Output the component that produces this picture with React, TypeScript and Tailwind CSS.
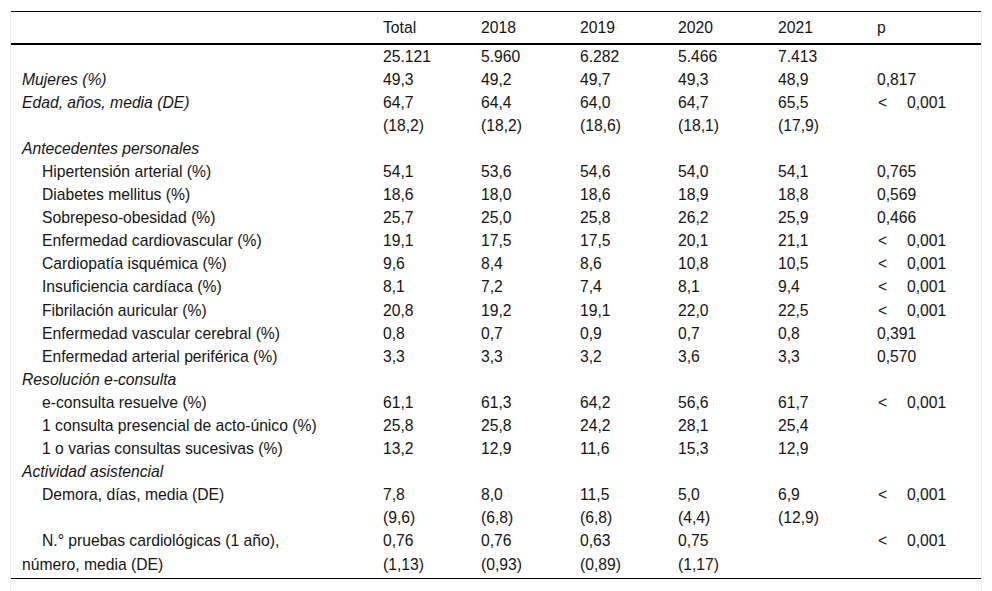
type Row =
  | { kind: 'section'; label: string }
  | { kind: 'data'; label: string; sub?: boolean; cells: string[]; p?: string; italic?: boolean }

const rows: Row[] = [
  { kind: 'data', label: '', cells: ['25.121', '5.960', '6.282', '5.466', '7.413'] },
  { kind: 'data', label: 'Mujeres (%)', italic: true, cells: ['49,3', '49,2', '49,7', '49,3', '48,9'], p: '0,817' },
  {
    kind: 'data',
    label: 'Edad, años, media (DE)',
    italic: true,
    cells: ['64,7|(18,2)', '64,4|(18,2)', '64,0|(18,6)', '64,7|(18,1)', '65,5|(17,9)'],
    p: '<0,001',
  },
  { kind: 'section', label: 'Antecedentes personales' },
  { kind: 'data', sub: true, label: 'Hipertensión arterial (%)', cells: ['54,1', '53,6', '54,6', '54,0', '54,1'], p: '0,765' },
  { kind: 'data', sub: true, label: 'Diabetes mellitus (%)', cells: ['18,6', '18,0', '18,6', '18,9', '18,8'], p: '0,569' },
  { kind: 'data', sub: true, label: 'Sobrepeso-obesidad (%)', cells: ['25,7', '25,0', '25,8', '26,2', '25,9'], p: '0,466' },
  { kind: 'data', sub: true, label: 'Enfermedad cardiovascular (%)', cells: ['19,1', '17,5', '17,5', '20,1', '21,1'], p: '<0,001' },
  { kind: 'data', sub: true, label: 'Cardiopatía isquémica (%)', cells: ['9,6', '8,4', '8,6', '10,8', '10,5'], p: '<0,001' },
  { kind: 'data', sub: true, label: 'Insuficiencia cardíaca (%)', cells: ['8,1', '7,2', '7,4', '8,1', '9,4'], p: '<0,001' },
  { kind: 'data', sub: true, label: 'Fibrilación auricular (%)', cells: ['20,8', '19,2', '19,1', '22,0', '22,5'], p: '<0,001' },
  { kind: 'data', sub: true, label: 'Enfermedad vascular cerebral (%)', cells: ['0,8', '0,7', '0,9', '0,7', '0,8'], p: '0,391' },
  { kind: 'data', sub: true, label: 'Enfermedad arterial periférica (%)', cells: ['3,3', '3,3', '3,2', '3,6', '3,3'], p: '0,570' },
  { kind: 'section', label: 'Resolución e-consulta' },
  { kind: 'data', sub: true, label: 'e-consulta resuelve (%)', cells: ['61,1', '61,3', '64,2', '56,6', '61,7'], p: '<0,001' },
  { kind: 'data', sub: true, label: '1 consulta presencial de acto-único (%)', cells: ['25,8', '25,8', '24,2', '28,1', '25,4'] },
  { kind: 'data', sub: true, label: '1 o varias consultas sucesivas (%)', cells: ['13,2', '12,9', '11,6', '15,3', '12,9'] },
  { kind: 'section', label: 'Actividad asistencial' },
  {
    kind: 'data',
    sub: true,
    label: 'Demora, días, media (DE)',
    cells: ['7,8|(9,6)', '8,0|(6,8)', '11,5|(6,8)', '5,0|(4,4)', '6,9|(12,9)'],
    p: '<0,001',
  },
  {
    kind: 'data',
    sub: true,
    label: 'N.° pruebas cardiológicas (1 año),|número, media (DE)',
    cells: ['0,76|(1,13)', '0,76|(0,93)', '0,63|(0,89)', '0,75|(1,17)', ''],
    p: '<0,001',
  },
]

function Lines({ text }: { text: string }) {
  const parts = text.split('|')
  return (
    <>
      {parts.map((t, i) => (
        <span key={i}>
          {i > 0 && <br />}
          {t}
        </span>
      ))}
    </>
  )
}

function PValue({ p }: { p?: string }) {
  if (!p) return null
  if (p.startsWith('<')) {
    return (
      <span>
        <span className="inline-block w-[30px] pl-[1px]">&lt;</span>
        {p.slice(1)}
      </span>
    )
  }
  return <span>{p}</span>
}

export default function App() {
  return (
    <div className="min-h-screen bg-white font-['Liberation_Sans',Arial,sans-serif] text-[15.7px] leading-[23.1px] text-[#141414]">
      <div className="ml-[10px] mt-[10px] min-h-[581px] w-[972px] border-x border-[#ececec] pt-px">
        <table className="w-[970px] table-fixed border-collapse">
          <colgroup>
            <col className="w-[362px]" />
            <col className="w-[98px]" />
            <col className="w-[99px]" />
            <col className="w-[98px]" />
            <col className="w-[100px]" />
            <col className="w-[99px]" />
            <col className="w-[114px]" />
          </colgroup>
          <thead>
            <tr className="border-t border-b-2 border-black">
              <th className="h-[32px]"></th>
              {['Total', '2018', '2019', '2020', '2021', 'p'].map((h) => (
                <th key={h} className="pl-[10px] pt-px text-left align-middle font-normal">
                  {h}
                </th>
              ))}
            </tr>
          </thead>
          <tbody className="border-b border-black">
            {rows.map((r, i) =>
              r.kind === 'section' ? (
                <tr key={i}>
                  <td colSpan={7} className="pl-[11px] italic">
                    {r.label}
                  </td>
                </tr>
              ) : (
                <tr key={i} className="align-top">
                  <td className={`pl-[11px] ${r.sub ? 'indent-5' : ''} ${r.italic ? 'italic' : ''}`}>
                    <Lines text={r.label} />
                  </td>
                  {r.cells.map((c, j) => (
                    <td key={j} className="pl-[10px]">
                      <Lines text={c} />
                    </td>
                  ))}
                  <td className="pl-[10px]">
                    <PValue p={r.p} />
                  </td>
                </tr>
              ),
            )}
            <tr>
              <td colSpan={7} className="h-[3px] p-0 leading-[3px]"></td>
            </tr>
          </tbody>
        </table>
      </div>
    </div>
  )
}
